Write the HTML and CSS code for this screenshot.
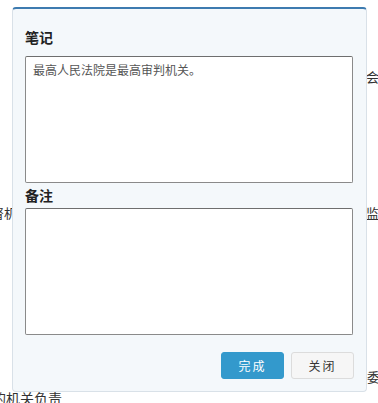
FILE: index.html
```html
<!DOCTYPE html>
<html lang="zh-CN">
<head>
    <meta charset="UTF-8">
    <meta name="viewport" content="width=device-width, initial-scale=1.0">
    <title>笔记</title>
    <link rel="stylesheet" href="styles.css">
</head>
<body>
    <div class="page">
        <div class="page-row row-1"><span></span><span class="edge-right">会议</span></div>
        <div class="page-row row-2"><span class="edge-left">监督机</span><span class="edge-right">监察</span></div>
        <div class="page-row row-3"><span></span><span class="edge-right far">委员</span></div>
        <div class="page-row row-4"><span class="edge-left">的机关负责</span></div>
    </div>

    <div class="dialog">
        <h2 class="label first">笔记</h2>
        <textarea class="field">最高人民法院是最高审判机关。</textarea>
        <h2 class="label">备注</h2>
        <textarea class="field"></textarea>
        <div class="actions">
            <button class="btn btn-primary">完成</button>
            <button class="btn btn-default">关闭</button>
        </div>
    </div>
</body>
</html>
```

FILE: styles.css
```css
html, body {
    margin: 0;
    padding: 0;
}
body {
    background-color: #ffffff;
    font-family: "Noto Sans CJK SC", "Liberation Sans", sans-serif;
    color: #333;
    width: 378px;
    height: 403px;
    overflow: hidden;
    position: relative;
}
.page {
    font-size: 13px;
    line-height: 16px;
}
.page-row {
    display: flex;
    justify-content: space-between;
    white-space: nowrap;
}
.row-1 { margin-top: 69px; }
.row-2 { margin-top: 120px; }
.row-3 { margin-top: 148px; }
.row-4 {
    margin-top: 5px;
    font-size: 14px;
}
.edge-right {
    margin-right: -14px;
}
.edge-right.far {
    margin-right: -15px;
}
.edge-left {
    margin-left: -22px;
}
.row-4 .edge-left {
    margin-left: -8px;
}
.dialog {
    position: absolute;
    left: 12px;
    top: 7px;
    width: 355px;
    height: 385px;
    background-color: #f4f8fb;
    border: 1px solid #d9e1e8;
    border-top: 2px solid #3d7bb0;
    border-radius: 4px;
    padding: 0 12px;
    box-sizing: border-box;
    display: flex;
    flex-direction: column;
}
.label {
    margin: 0;
    font-size: 14px;
    font-weight: bold;
    color: #222;
    line-height: 20px;
    height: 20px;
}
.label.first {
    margin-top: 18px;
    margin-bottom: 9px;
}
.field {
    width: 328px;
    height: 127px;
    box-sizing: border-box;
    border: 1px solid #8a8a8a;
    border-top-color: #6e6e6e;
    border-radius: 2px;
    background: #fff;
    resize: none;
    padding: 5px 7px;
    font-family: "Noto Sans CJK SC", "Liberation Sans", sans-serif;
    font-size: 12px;
    line-height: 16px;
    color: #555;
    margin: 0;
}
.field + .label {
    margin-top: 2px;
    margin-bottom: 3px;
}
.actions {
    display: flex;
    justify-content: flex-end;
    gap: 7px;
    margin-top: 17px;
}
.btn {
    width: 63px;
    height: 27px;
    font-family: "Noto Sans CJK SC", "Liberation Sans", sans-serif;
    font-size: 12px;
    letter-spacing: 2px;
    border-radius: 3px;
    cursor: pointer;
    padding: 0;
}
.btn-primary {
    background-color: #3399cc;
    border: 1px solid #3399cc;
    color: #fff;
}
.btn-default {
    background-color: #f6f6f6;
    border: 1px solid #dcdcdc;
    color: #333;
}
```
